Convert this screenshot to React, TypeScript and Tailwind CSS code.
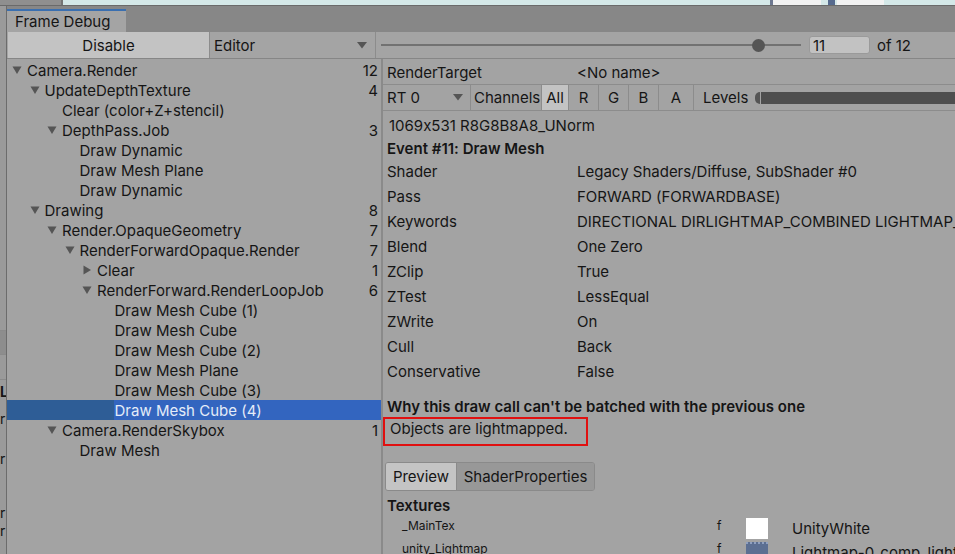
import React from "react";

type Node = { label: string; depth: number; count?: number; arrow?: "down" | "right"; selected?: boolean };

const tree: Node[] = [
  { label: "Camera.Render", depth: 0, count: 12, arrow: "down" },
  { label: "UpdateDepthTexture", depth: 1, count: 4, arrow: "down" },
  { label: "Clear (color+Z+stencil)", depth: 2 },
  { label: "DepthPass.Job", depth: 2, count: 3, arrow: "down" },
  { label: "Draw Dynamic", depth: 3 },
  { label: "Draw Mesh Plane", depth: 3 },
  { label: "Draw Dynamic", depth: 3 },
  { label: "Drawing", depth: 1, count: 8, arrow: "down" },
  { label: "Render.OpaqueGeometry", depth: 2, count: 7, arrow: "down" },
  { label: "RenderForwardOpaque.Render", depth: 3, count: 7, arrow: "down" },
  { label: "Clear", depth: 4, count: 1, arrow: "right" },
  { label: "RenderForward.RenderLoopJob", depth: 4, count: 6, arrow: "down" },
  { label: "Draw Mesh Cube (1)", depth: 5 },
  { label: "Draw Mesh Cube", depth: 5 },
  { label: "Draw Mesh Cube (2)", depth: 5 },
  { label: "Draw Mesh Plane", depth: 5 },
  { label: "Draw Mesh Cube (3)", depth: 5 },
  { label: "Draw Mesh Cube (4)", depth: 5, selected: true },
  { label: "Camera.RenderSkybox", depth: 2, count: 1, arrow: "down" },
  { label: "Draw Mesh", depth: 3 },
];

const props: [string, string][] = [
  ["Shader", "Legacy Shaders/Diffuse, SubShader #0"],
  ["Pass", "FORWARD (FORWARDBASE)"],
  ["Keywords", "DIRECTIONAL DIRLIGHTMAP_COMBINED LIGHTMAP_ON"],
  ["Blend", "One Zero"],
  ["ZClip", "True"],
  ["ZTest", "LessEqual"],
  ["ZWrite", "On"],
  ["Cull", "Back"],
  ["Conservative", "False"],
];

function Arrow({ dir }: { dir: "down" | "right" }) {
  const c = "#555555";
  return (
    <svg width="10" height="10" viewBox="0 0 10 10" className="shrink-0">
      {dir === "down" ? <path d="M0.5 1.5 H9.5 L5 9 Z" fill={c} /> : <path d="M1.5 0.5 V9.5 L9 5 Z" fill={c} />}
    </svg>
  );
}

function TreeRow({ n }: { n: Node }) {
  const textX = 20 + n.depth * 17.5;
  return (
    <div className={`relative flex h-[20px] shrink-0 items-center pr-[3px] ${n.selected ? "bg-[#3365bf] text-[#e4ecf8]" : ""}`}>
      {n.selected && <div className="absolute left-0 top-0 h-full w-[107px] bg-[#2e5d96]" />}
      <div className="relative flex flex-1 items-center" style={{ paddingLeft: textX - 15 }}>
        <div className="flex w-[15px] items-center">{n.arrow && <Arrow dir={n.arrow} />}</div>
        <span className="whitespace-nowrap">{n.label}</span>
      </div>
      {n.count !== undefined && <span className="relative">{n.count}</span>}
    </div>
  );
}

function Caret() {
  return (
    <svg width="10" height="7" viewBox="0 0 10 7">
      <path d="M0 0 H10 L5 6.5 Z" fill="#555555" />
    </svg>
  );
}

export default function App() {
  return (
    <div className="relative flex h-[554px] w-[955px] flex-col overflow-hidden bg-[#878787] font-['Inter','Liberation_Sans',sans-serif] text-[14px] leading-none text-[#151515] [font-feature-settings:'calt'_0]">
      {/* background strip from windows behind */}
      <div className="flex h-[5px] shrink-0">
        <div className="w-[63px] border-r-2 border-[#747474] bg-[#8f8f8f]" />
        <div className="flex flex-1 bg-[#d4e8e8]">
          <div className="w-[707px]" />
          <div className="w-[3px] bg-[#6d7890]" />
          <div className="w-[48px] bg-[#f2f2f2]" />
          <div className="w-[7px]" />
          <div className="w-[7px] bg-[#566a8e]" />
          <div className="w-[2px]" />
          <div className="w-[47px] bg-[#f2f2f2]" />
        </div>
      </div>
      <div className="h-px shrink-0 bg-[#6a6a6a]" />

      <div className="flex min-h-0 flex-1">
        {/* left sliver of a panel behind */}
        <div className="flex w-[7px] shrink-0 flex-col overflow-hidden border-r border-[#6c6c6c] bg-[#9a9a9a] text-[14px]">
          <div className="h-[324px] shrink-0" />
          <div className="h-[25px] shrink-0 border-y border-[#8a8a8a] bg-[#8d8d8d]" />
          <div className="h-[24px] shrink-0" />
          <div className="h-[25px] shrink-0 border-t border-[#8a8a8a] pt-[5px] font-bold">L</div>
          <div className="h-[40px] shrink-0 pt-[8px]">r</div>
          <div className="h-[60px] shrink-0 pt-[8px]">r</div>
          <div className="h-[20px] shrink-0 pt-[2px]">r</div>
          <div className="h-[20px] shrink-0">r</div>
        </div>

        {/* window */}
        <div className="flex min-w-0 flex-1 flex-col">
          {/* tab bar */}
          <div className="flex h-[26px] shrink-0 items-end">
            <div className="flex h-[23px] w-[119px] items-center border-t-[2px] border-[#3a6fb0] bg-[#a4a4a4] pl-[8px] text-[15px]">
              Frame Debug
            </div>
          </div>

          {/* toolbar */}
          <div className="flex h-[27px] shrink-0 items-stretch border-b border-[#868686] bg-[#a4a4a4]">
            <div className="ml-px flex w-[202px] items-center justify-center border-r border-[#8c8c8c] bg-[#c3c3c3] text-[15px]">
              Disable
            </div>
            <div className="flex w-[166px] items-center justify-between border-r border-[#8c8c8c] pl-[4px] pr-[8px] text-[15px]">
              <span>Editor</span>
              <Caret />
            </div>
            <div className="flex flex-1 items-center pl-[5px]">
              <div className="relative flex h-[14px] w-[420px] items-center">
                <div className="h-[2px] w-full bg-[#727272]" />
                <div className="absolute left-[371px] h-[13px] w-[13px] rounded-full bg-[#555555]" />
              </div>
              <div className="ml-[8px] flex h-[18px] w-[61px] items-center rounded-[3px] border border-[#9a9a9a] bg-[#c2c2c2] pl-[3px] text-[15px]">
                11
              </div>
              <span className="ml-[7px] text-[15px]">of 12</span>
            </div>
          </div>

          {/* body */}
          <div className="flex min-h-0 flex-1 bg-[#a3a3a3]">
            {/* tree */}
            <div className="flex w-[376px] shrink-0 flex-col border-r-2 border-[#8a8a8a] pt-px text-[15px]">
              {tree.map((n, i) => (
                <TreeRow key={i} n={n} />
              ))}
            </div>

            {/* details */}
            <div className="flex min-w-0 flex-1 flex-col overflow-hidden text-[15px]">
              <div className="flex h-[26px] shrink-0 items-center border-b border-[#8c8c8c] pl-[4px] pt-[2px]">
                <span className="w-[190px]">RenderTarget</span>
                <span>&lt;No name&gt;</span>
              </div>
              <div className="flex h-[26px] shrink-0 items-stretch border-b border-[#8c8c8c]">
                <div className="flex w-[88px] items-center justify-between border-r border-[#8c8c8c] pl-[4px] pr-[7px]">
                  <span>RT 0</span>
                  <Caret />
                </div>
                <div className="flex w-[70px] items-center pl-[3px]">Channels</div>
                <div className="flex w-[28px] items-center justify-center border-x border-[#8c8c8c] bg-[#c3c3c3]">All</div>
                <div className="flex w-[30px] items-center justify-center border-r border-[#8c8c8c]">R</div>
                <div className="flex w-[30px] items-center justify-center border-r border-[#8c8c8c]">G</div>
                <div className="flex w-[30px] items-center justify-center border-r border-[#8c8c8c]">B</div>
                <div className="flex w-[35px] items-center justify-center border-r border-[#8c8c8c]">A</div>
                <div className="flex flex-1 items-center pl-[9px]">
                  <span>Levels</span>
                  <div className="ml-[7px] flex h-[12px] flex-1 items-center">
                    <div className="h-[12px] w-[5px] rounded-l-full bg-[#555555]" />
                    <div className="ml-px h-[12px] flex-1 bg-[#4e4e4e]" />
                  </div>
                </div>
              </div>

              <div className="flex h-[26px] shrink-0 items-center pl-[6px] pt-[2px]">1069x531 R8G8B8A8_UNorm</div>
              <div className="flex h-[22px] shrink-0 items-center pl-[4px] font-semibold">Event #11: Draw Mesh</div>
              {props.map(([k, v]) => (
                <div key={k} className="flex h-[25px] shrink-0 items-center whitespace-nowrap pl-[4px]">
                  <span className="w-[190px] shrink-0">{k}</span>
                  <span>{v}</span>
                </div>
              ))}
              <div className="mt-[11px] flex h-[22px] shrink-0 items-center whitespace-nowrap pl-[4px] font-semibold">
                Why this draw call can&apos;t be batched with the previous one
              </div>
              <div className="h-[29px] w-[205px] shrink-0 border-2 border-[#e01010] pl-[5px] pt-[2px]">
                Objects are lightmapped.
              </div>
              <div className="ml-[2px] mt-[16px] flex h-[29px] w-[210px] shrink-0 overflow-hidden rounded-[3px] border border-[#8a8a8a]">
                <div className="flex w-[71px] items-center justify-center border-r border-[#8a8a8a] bg-[#c4c4c4]">Preview</div>
                <div className="flex flex-1 items-center justify-center bg-[#989898]">ShaderProperties</div>
              </div>
              <div className="mt-[3px] flex h-[22px] shrink-0 items-center pl-[4px] font-semibold">Textures</div>
              <div className="flex h-[24px] shrink-0 items-center whitespace-nowrap">
                <span className="w-[334px] shrink-0 self-start pl-[19px] pt-[4px] text-[12px]">_MainTex</span>
                <span className="w-[29px] shrink-0 self-start pt-[4px] text-[12px]">f</span>
                <div className="h-[21px] w-[22px] shrink-0 bg-white" />
                <span className="ml-[24px]">UnityWhite</span>
              </div>
              <div className="flex h-[25px] shrink-0 items-center whitespace-nowrap">
                <span className="w-[334px] shrink-0 self-start pl-[19px] pt-[3px] text-[12px]">unity_Lightmap</span>
                <span className="w-[29px] shrink-0 self-start pt-[3px] text-[12px]">f</span>
                <div className="h-[21px] w-[22px] shrink-0 border-t-2 border-dotted border-[#8fa0c0] bg-[#5c6f92]" />
                <span className="ml-[24px]">Lightmap-0_comp_light</span>
              </div>
            </div>
          </div>
        </div>
      </div>
    </div>
  );
}
